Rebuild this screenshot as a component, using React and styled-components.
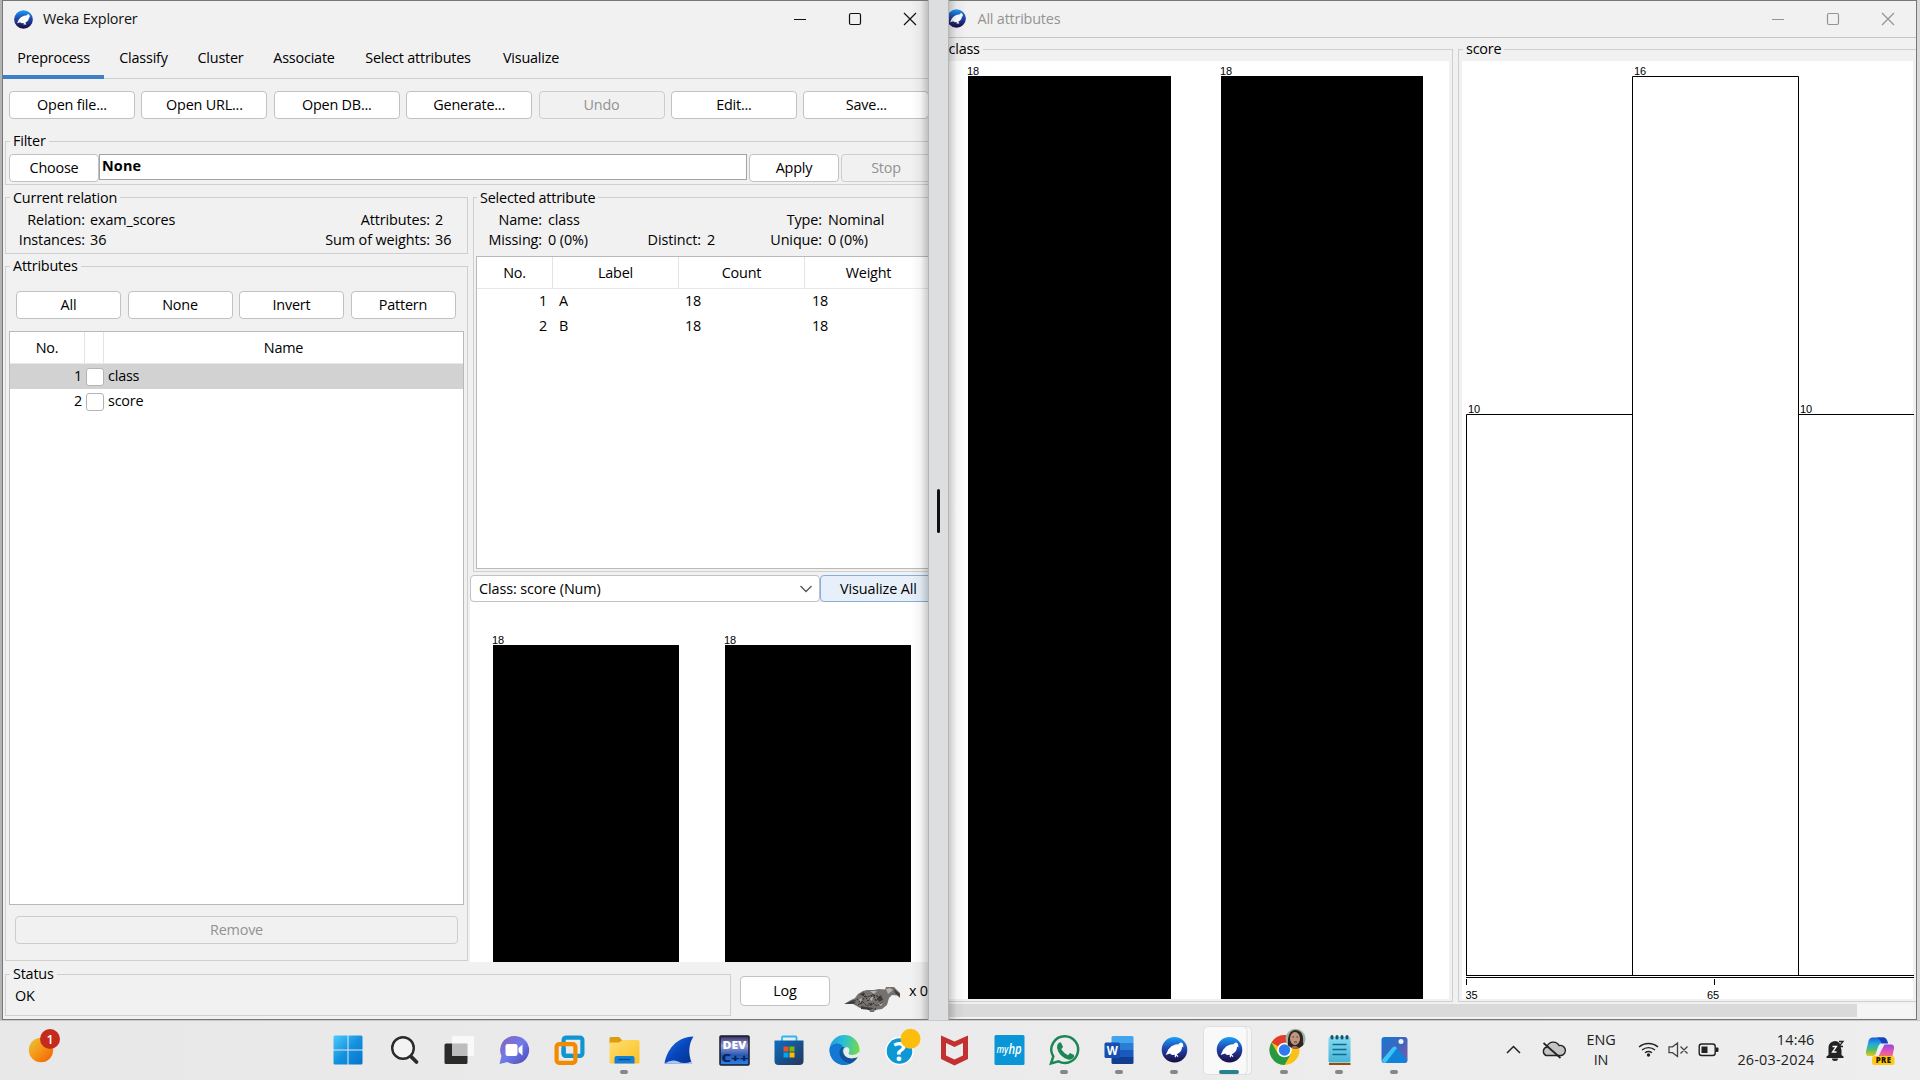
import React from "react";
import styled, { createGlobalStyle } from "styled-components";

const GlobalStyle = createGlobalStyle`
  * { box-sizing: border-box; }
  body { margin: 0; overflow: hidden; background: #ececec; }
`;

const Screen = styled.div`
  width: 1920px;
  height: 1080px;
  display: flex;
  flex-direction: column;
  overflow: hidden;
  font-family: "Open Sans", "Noto Sans", sans-serif;
  font-size: 14.4px;
  letter-spacing: -0.2px;
  line-height: 20px;
  color: #000;
  white-space: nowrap;
`;

const Desktop = styled.div`
  height: 1020px;
  display: flex;
  padding: 0 3px 0 2px;
  background: linear-gradient(90deg, #b4b4b4 0 2px, #d9d9d9 2px);
`;

const Window = styled.section`
  position: relative;
  width: ${(p) => p.$w}px;
  flex: none;
  height: 1020px;
  background: #f1f1f1;
  border: 1px solid #777;
  border-${(p) => p.$open}: 0;
  overflow: hidden;
  display: flex;
  flex-direction: column;
  &::after {
    content: "";
    position: absolute;
    top: 0;
    bottom: 0;
    ${(p) => p.$open}: 0;
    width: 17px;
    pointer-events: none;
    background: linear-gradient(to ${(p) => p.$open}, rgba(0, 0, 0, 0), rgba(0, 0, 0, 0.04) 55%, rgba(0, 0, 0, 0.2));
  }
`;

const Divider = styled.div`
  width: 21px;
  flex: none;
  display: flex;
  align-items: center;
  justify-content: center;
  padding-top: 1px;
  background: linear-gradient(90deg, #b0b2b3 0 1px, #dddedf 1px 20px, #b4b6b7 20px);
`;
const Handle = styled.div`
  width: 3px;
  height: 44px;
  border-radius: 2px;
  background: #111;
`;

const TitleBar = styled.header`
  height: 37px;
  flex: none;
  display: flex;
  align-items: center;
  padding: 0 ${(p) => p.$right}px 1px ${(p) => p.$left}px;
  color: ${(p) => (p.$dim ? "#949494" : "#111")};
  border-bottom: ${(p) => (p.$dim ? "1px solid #c6c6c6" : "0")};
`;
const TitleText = styled.span`
  margin-left: 10px;
  flex: 1;
`;
const Controls = styled.div`
  display: flex;
  gap: 41px;
`;

const Tabs = styled.nav`
  height: 41px;
  flex: none;
  display: flex;
  box-shadow: inset 0 -1px #cfcfcf;
`;
const Tab = styled.div`
  width: ${(p) => p.$w}px;
  text-align: center;
  line-height: 40px;
  border-bottom: 4px solid ${(p) => (p.$active ? "#3d80c5" : "transparent")};
`;

const Toolbar = styled.div`
  display: grid;
  grid-template-columns: repeat(7, 126px);
  column-gap: 6.4px;
  margin: 12px 0 12px 6px;
`;

const Button = styled.button`
  width: ${(p) => (p.$w ? `${p.$w}px` : "100%")};
  height: ${(p) => p.$h || 28}px;
  flex: none;
  margin-left: ${(p) => p.$ml || 0}px;
  padding: 0;
  font: inherit;
  letter-spacing: inherit;
  line-height: 20px;
  color: ${(p) => (p.disabled ? "#919191" : "#000")};
  background: ${(p) => (p.disabled ? "#f1f1f1" : p.$focus ? "#e7f0fa" : "#fff")};
  border: 1px solid ${(p) => (p.disabled ? "#cdcdcd" : p.$focus ? "#82b0dc" : "#c2c2c2")};
  border-radius: 4px;
`;

const Group = styled.fieldset`
  min-width: 0;
  flex: none;
  width: ${(p) => p.$w}px;
  height: ${(p) => p.$h}px;
  margin: ${(p) => p.$m || "0"};
  padding: 0;
  border: 1px solid #cfcfcf;
`;
const Legend = styled.legend`
  margin-left: ${(p) => p.$ml || 4}px;
  padding: 0 3px ${(p) => (p.$raised ? 2 : 0)}px;
  line-height: ${(p) => (p.$raised ? 19 : 21)}px;
`;

const FilterRow = styled.div`
  display: flex;
  padding: 2px 0 0 3px;
`;
const FilterField = styled.div`
  width: 648px;
  height: 26px;
  margin-right: 2px;
  padding-left: 2px;
  line-height: 21px;
  font-weight: 700;
  letter-spacing: 0.15px;
  background: #fff;
  border: 1px solid #a3a3a3;
`;

const Columns = styled.div`
  display: flex;
  height: 775px;
  flex: none;
  margin: 2px 0 2px 2px;
`;
const LeftColumn = styled.div`
  width: 463px;
  flex: none;
`;
const RightColumn = styled.div`
  width: 520px;
  flex: none;
  margin-left: 2px;
  display: flex;
  flex-direction: column;
`;

const Info = styled.div`
  display: grid;
  grid-template-columns: ${(p) => p.$cols};
  column-gap: ${(p) => p.$gap}px;
  grid-auto-rows: 20px;
  padding-top: 2px;
  letter-spacing: -0.1px;
  & > span:nth-child(odd) { justify-self: end; }
`;

const FourButtons = styled.div`
  display: grid;
  grid-template-columns: repeat(4, 105px);
  column-gap: 6.5px;
  margin: 14px 0 12px 10px;
`;
const RemoveSlot = styled.div`
  margin: 11px 0 0 9px;
`;
const Table = styled.div`
  width: ${(p) => p.$w}px;
  height: ${(p) => p.$h}px;
  margin: ${(p) => p.$m};
  background: #fff;
  border: 1px solid #b9b9b9;
`;
const HeadRow = styled.div`
  display: grid;
  grid-template-columns: ${(p) => p.$cols};
  height: 32px;
  line-height: 31px;
  text-align: center;
  border-bottom: 1px solid #e8e8e8;
  & > span { border-right: 1px solid #e4e4e4; }
  & > span:last-child { border-right: 0; }
`;
const Row = styled.div`
  display: grid;
  grid-template-columns: ${(p) => p.$cols};
  height: 25px;
  align-items: center;
  background: ${(p) => (p.$selected ? "#d2d2d2" : "#fff")};
`;
const Cell = styled.span`
  line-height: 23px;
  padding: 0 ${(p) => p.$pr || 0}px 2px ${(p) => p.$pl || 0}px;
  text-align: ${(p) => (p.$right ? "right" : "left")};
`;
const Check = styled.span`
  width: 18px;
  height: 18px;
  margin-left: 1px;
  background: #fff;
  border: 1px solid #b4b4b4;
  border-radius: 3px;
`;

const ComboRow = styled.div`
  display: flex;
  margin-top: 3px;
  letter-spacing: -0.1px;
`;
const Combo = styled.div`
  width: 350px;
  height: 27px;
  display: flex;
  align-items: center;
  justify-content: space-between;
  padding: 0 7px 0 8px;
  background: #fff;
  border: 1px solid #c2c2c2;
  border-radius: 4px;
`;

const MiniChart = styled.div`
  flex: 1;
  background: #fff;
  display: flex;
  gap: ${(p) => p.$gap}px;
  padding: ${(p) => p.$pad};
`;
const BarColumn = styled.div`
  width: ${(p) => p.$w}px;
  flex: none;
  display: flex;
  flex-direction: column;
`;
const BarCount = styled.span`
  height: 12px;
  font: 11px/14px "Liberation Sans", Arial, sans-serif;
  letter-spacing: 0;
  margin-left: -1px;
`;
const BarFill = styled.div`
  flex: 1;
  background: #000;
`;

const StatusRow = styled.footer`
  display: flex;
  padding-left: 2px;
`;
const StatusText = styled.div`
  padding-left: 9px;
  line-height: 22px;
`;
const LogSlot = styled.div`
  padding: 12px 0 0 9px;
`;
const BirdBox = styled.div`
  margin: 22px 0 0 14px;
  width: 60px;
`;
const Times = styled.span`
  margin: 17px 0 0 5px;
`;

const IconClip = styled.div`
  width: 17px;
  margin-left: -2px;
`;
const PlotRow = styled.div`
  display: flex;
  height: 963px;
  flex: none;
  padding-top: 1px;
`;
const PlotBody = styled.div`
  height: 938px;
  margin: ${(p) => p.$m};
  background: #fff;
  display: flex;
`;
const ScrollTrack = styled.div`
  height: 14px;
  margin: 3px 3px 0 0;
  background: #f5f5f5;
`;
const ScrollThumb = styled.div`
  width: 908px;
  height: 13px;
  background: #dadada;
`;

const Taskbar = styled.div`
  height: 60px;
  display: flex;
  background: linear-gradient(90deg, #e8e8e8, #eeeeee);
  border-top: 1px solid #c9c9c9;
`;
const Widgets = styled.div`
  width: 321.5px;
  flex: none;
  padding-left: 20px;
`;
const TaskButton = styled.div`
  position: relative;
  width: 55px;
  height: 59px;
  flex: none;
  &::after {
    content: "";
    position: absolute;
    left: ${(p) => (p.$active ? 17.5 : 23.5)}px;
    top: 49px;
    width: ${(p) => (p.$active ? 20 : 8)}px;
    height: 4px;
    border-radius: 2px;
    background: ${(p) => (p.$active ? "#27818f" : p.$running ? "#868686" : "transparent")};
  }
`;
const Tray = styled.div`
  flex: 1;
  display: flex;
  align-items: center;
  color: #222;
`;
const TrayText = styled.div`
  width: ${(p) => p.$w}px;
  text-align: ${(p) => p.$align};
  line-height: 20px;
  letter-spacing: ${(p) => p.$ls || 0}px;
  padding-bottom: 1px;
  flex: none;
`;
const TraySlot = styled.div`
  width: ${(p) => p.$w}px;
  height: 59px;
  flex: none;
`;

const Svg = styled.svg`
  display: block;
  flex: none;
  overflow: visible;
`;

const WekaMark = ({ size, x, y, id }) => (
  <Svg width={size} height={size} x={x} y={y} viewBox="0 0 26 26">
    <defs>
      <linearGradient id={id} x1="0" y1="0" x2="0" y2="1">
        <stop offset="0" stopColor="#18a0fb" />
        <stop offset=".45" stopColor="#2146ae" />
        <stop offset="1" stopColor="#190b3c" />
      </linearGradient>
    </defs>
    <circle cx="13" cy="13" r="12.8" fill={`url(#${id})`} />
    <path fill="#fff" d="M4.2 18.2 6.8 12.8Q9.5 9 14 7.8L17 7.4Q18.3 5.2 20.3 5.9 21.9 6.700 21.800 10.600L20.500 9.600Q20.500 14.500 16.600 16.600L15.200 17.500 17 19.400 15.800 20.200 14.600 18.800 14.300 20.600 13.200 20.200 13.300 17.900 10.400 18.100 8.500 16.800Z" />
  </Svg>
);

const WindowControls = () => (
  <Controls>
    <Svg width="14" height="14" fill="none" stroke="currentColor"><path d="M1 7.5h12" /></Svg>
    <Svg width="14" height="14" fill="none" stroke="currentColor" strokeWidth="1.2"><rect x="1.5" y="1.5" width="11" height="11" rx="1.5" /></Svg>
    <Svg width="14" height="14" fill="none" stroke="currentColor" strokeWidth="1.2"><path d="M1 1 13 13M13 1 1 13" /></Svg>
  </Controls>
);

const WekaBird = () => (
  <Svg width="60" height="28" viewBox="0 0 60 28">
    <path fill="#75716e" d="M0 18 6 14.500 11 12 14 8 19 5 23 4 30 4 35 3 41 3.500 42 1 50 1 56 7 56 12 53.500 9.500 48 9 45 12 43 19 38 23 31 24 30 26 26 26 25 23 16 22 9 18Z" />
    <path fill="#3f3c3a" d="M1 18 9 14 12 17 8 18ZM17 20 22 21 30 22 26 24 17 23ZM15 9 20 6 21 9ZM50 3 56 8 55.500 11 51 7ZM33 12 37 9 39 14 35 16ZM24 17 29 18 27 20Z" />
    <path fill="#b8b3ad" d="M42 3 46 2 49 4 44 8ZM26 5 33 5 30 8ZM14 14 18 12 17 16ZM24 12 29 11 28 15ZM34 18 39 17 37 20Z" />
    <path d="M10 15l4-2 3 5 4-8 3 5 5-7 3 7 4-4 3 3M14 19l5-3 4 4 6-3 4 3 6-4M24 22l1 3M31 22l1 3M18 9l6 2 5-2 7 2" stroke="#2f2d2b" strokeWidth="1" strokeDasharray="2 1" fill="none" />
  </Svg>
);

const ICONS = [
  ["start", 0, (
    <g fill="url(#gStart)">
      <path d="M11.500 17a1.500 1.500 0 0 1 1.500-1.500H25.500V29.500H11.500ZM26.500 15.500H39a1.500 1.500 0 0 1 1.500 1.500V29.500H26.500ZM11.500 30.500H25.500V44.500H13a1.500 1.500 0 0 1-1.500-1.500ZM26.500 30.500H40.500V43a1.500 1.500 0 0 1-1.500 1.500H26.500Z" />
    </g>
  )],
  ["search", 0, (
    <g fill="none" stroke="#2a2a2a" strokeLinecap="round">
      <circle cx="26" cy="28" r="10.800" strokeWidth="2.400" fill="#f3f3f3" />
      <path d="M34 36.500 39.500 42" strokeWidth="3.800" />
    </g>
  )],
  ["taskview", 0, (
    <g>
      <rect x="12.500" y="23.500" width="23" height="20.500" rx="1.500" fill="#2b2b2a" />
      <rect x="20" y="16" width="22" height="20" rx="1.500" fill="#fafafa" opacity=".94" />
      <path d="M20 23.500H35.500V36H21.500a1.500 1.500 0 0 1-1.500-1.500Z" fill="#bdbdbd" />
    </g>
  )],
  ["chat", 0, (
    <g>
      <path d="M28 16a14.300 14 0 1 1-7.500 26L12.500 44 14.500 36A14.300 14 0 0 1 28 16Z" fill="url(#gChat)" />
      <rect x="18.500" y="24" width="12" height="12" rx="2.200" fill="#fff" />
      <path d="M31.500 28 35.500 24.500V35.500L31.500 32Z" fill="#fff" />
    </g>
  )],
  ["vmware", 0, (
    <g fill="none" strokeWidth="4.200">
      <rect x="21.600" y="17.600" width="18.800" height="18.300" rx="2.500" stroke="#0f96d2" />
      <rect x="14.600" y="24.200" width="18.800" height="18.600" rx="2.500" stroke="#f38b00" />
      <path d="M21.600 28V33.400a2.500 2.500 0 0 0 2.500 2.500H30" stroke="#0f96d2" />
    </g>
  )],
  ["files", 1, (
    <g>
      <path d="M12.500 18.500a1.500 1.500 0 0 1 1.500-1.500H22L25 20H34V24H12.500Z" fill="#dd9c0c" />
      <path d="M12.500 22.500H22L25.500 20H41a1.500 1.500 0 0 1 1.500 1.500V42a1.500 1.500 0 0 1-1.500 1.500H14a1.500 1.500 0 0 1-1.500-1.500Z" fill="url(#gFolder)" />
      <path d="M17.500 43.500V38a2 2 0 0 1 2-2H35.500a2 2 0 0 1 2 2V43.500Z" fill="#1180d6" />
      <path d="M21.500 39.500H33.500" stroke="#0a4c8f" strokeWidth="1.300" />
    </g>
  )],
  ["shark", 0, (
    <g>
      <path d="M12.500 43.500C15 30 24 17 41.500 16.500 36.500 24 36 34 40 43.500Z" fill="url(#gShark)" />
      <path d="M12.500 43.500Q20 38.500 26 41.500T39.500 41.500L40.500 44Z" fill="#a9c6ef" />
    </g>
  )],
  ["dev", 0, (
    <g fontFamily="Open Sans, sans-serif" fontWeight="800" letterSpacing="0">
      <rect x="13" y="16" width="29" height="29" rx="1" fill="url(#gDev)" stroke="#151b2a" strokeWidth="1.500" />
      <text x="15.500" y="28.500" fontSize="10.500" fill="#fff" textLength="24" lengthAdjust="spacingAndGlyphs">DEV</text>
      <text x="14.500" y="41.800" fontSize="10.500" fill="#07235a" textLength="27" lengthAdjust="spacingAndGlyphs">C++</text>
    </g>
  )],
  ["store", 0, (
    <g>
      <path d="M20 21V17.500a1 1 0 0 1 1-1H33.500a1 1 0 0 1 1 1V21" fill="none" stroke="#29b8f2" strokeWidth="1.800" />
      <path d="M12.500 20.500H41.500V41a4 4 0 0 1-4 4H16.500a4 4 0 0 1-4-4Z" fill="url(#gStore)" />
      <path fill="#f25022" d="M21.500 26.500h5v5h-5z" />
      <path fill="#7fba00" d="M27.500 26.500h5v5h-5z" />
      <path fill="#00a4ef" d="M21.500 32.500h5v5h-5z" />
      <path fill="#ffb900" d="M27.500 32.500h5v5h-5z" />
    </g>
  )],
  ["edge", 0, (
    <g>
      <circle cx="27.500" cy="30" r="15" fill="url(#gEdge)" />
      <path d="M12.700 28C15 23 22 22 26 26 22 28 22 35 27 39 31 42 37 41 40.500 37.500 37 43 32 45 27 45 18 45 11.500 37 12.700 28Z" fill="#1477d3" />
      <path d="M25 27C20 31 22 41 33 43.500 37 41.500 39.500 39 40.700 37 35 40 28 38 26 33 25 30 26 28 27.500 27Z" fill="#124f9c" />
      <path d="M26.500 32C26 28.500 28.500 26.500 31 27.500 33 29 32.500 31.500 31.500 33.500 33 36 39 35.500 42.500 31.500L42.500 36Q35 40 29.500 37 27 35 26.500 32Z" fill="#ebebeb" />
    </g>
  )],
  ["help", 0, (
    <g>
      <circle cx="27.500" cy="31" r="14.200" fill="#fff" />
      <circle cx="27.500" cy="31" r="12.800" fill="#0d97d5" />
      <text x="27.500" y="40.500" textAnchor="middle" fontFamily="Open Sans, sans-serif" fontWeight="700" fontSize="26" fill="#fff">?</text>
      <circle cx="38.500" cy="18.800" r="10" fill="#fdbd0d" />
    </g>
  )],
  ["mcafee", 0, (
    <path d="M14 15.500 27.500 21.500 41 15.500V39L27.500 45.500 14 39ZM19 23V35.500L27.500 39.500 36 35.500V23L27.500 27Z" fill="#c2312f" fillRule="evenodd" />
  )],
  ["myhp", 0, (
    <g fontFamily="Open Sans, sans-serif" fontStyle="italic" fill="#fff">
      <rect x="12.500" y="15" width="30" height="30" rx="1.500" fill="#0a96d6" />
      <text x="14.500" y="33" fontSize="10.500" fontWeight="600" textLength="11.500" lengthAdjust="spacingAndGlyphs">my</text>
      <text x="26.500" y="33.500" fontSize="15" fontWeight="600" textLength="13" lengthAdjust="spacingAndGlyphs">hp</text>
    </g>
  )],
  ["whatsapp", 1, (
    <g>
      <path d="M28 16.300a13.300 13.300 0 1 1-6.500 25L14 43.500 16.300 36.500A13.300 13.300 0 0 1 28 16.300Z" fill="none" stroke="#1c8755" strokeWidth="2.500" />
      <path d="M22 22.500h2l2 4.500-1.800 2.300Q27 33.500 31 35.200L33 33 37 35V37Q35 40.500 31 39.500 22 36.500 20 28 19.700 24.500 22 22.500Z" fill="#1c8755" />
    </g>
  )],
  ["word", 1, (
    <g>
      <path fill="#41a5ee" d="M19.500 17.500a1.500 1.500 0 0 1 1.500-1.500H40a1.500 1.500 0 0 1 1.500 1.500V23H19.500z" />
      <path fill="#2b7cd3" d="M19.500 23h22v7h-22z" />
      <path fill="#185abd" d="M19.500 30h22v7h-22z" />
      <path fill="#103f91" d="M19.500 37h22v5.500a1.500 1.500 0 0 1-1.500 1.500H21a1.500 1.500 0 0 1-1.500-1.500z" />
      <rect x="12.500" y="22.500" width="15.500" height="15.500" rx="1.500" fill="#174fb0" />
      <text x="20.200" y="34.500" textAnchor="middle" fontFamily="Open Sans, sans-serif" fontWeight="700" fontSize="11.500" fill="#fff">W</text>
    </g>
  )],
  ["weka", 1, <WekaMark size={26} x={14.5} y={16.8} id="gWekaA" />],
  ["wekaActive", 2, (
    <g>
      <rect x="12" y="6.500" width="37.500" height="48" rx="4" fill="#f6f6f6" stroke="#dedede" />
      <rect x="1.500" y="6.500" width="43.500" height="48" rx="4" fill="#f9f9f9" stroke="#dedede" />
      <WekaMark size={26} x={14.5} y={16.8} id="gWekaB" />
    </g>
  )],
  ["chrome", 1, (
    <g>
      <circle cx="27.500" cy="30" r="15" fill="#fbc116" />
      <path d="M27.500 30 14.500 22.500A15 15 0 0 1 40.500 22.500H27.500Z" fill="#e33b2e" />
      <path d="M14.500 22.500A15 15 0 0 0 27.500 45L34 33.700 27.500 30 21 33.700Z" fill="#269a43" />
      <circle cx="27.500" cy="30" r="7.300" fill="#fff" />
      <circle cx="27.500" cy="30" r="5.700" fill="#2d7bee" />
      <g clipPath="url(#cAvatar)">
        <rect x="28" y="8" width="22" height="22" fill="#9fb0a4" />
        <path d="M31 30V19Q32 10 39 10 47 11 46 22L48 30Z" fill="#2d2523" />
        <ellipse cx="38" cy="18.500" rx="5" ry="6.500" fill="#c09580" />
        <path d="M33 30Q35 25 39 26L45 30Z" fill="#a3695a" />
        <path d="M35.500 17h1.500M39.500 17h1.500M37 22h3" stroke="#512f2a" />
      </g>
    </g>
  )],
  ["notepad", 1, (
    <g>
      <path d="M17 43H38.500V45H17Z" fill="#9b4b05" />
      <path d="M16.500 18.500a1.500 1.500 0 0 1 1.500-1.500H37a1.500 1.500 0 0 1 1.500 1.500V41a1.500 1.500 0 0 1-1.500 1.500H18a1.500 1.500 0 0 1-1.500-1.500Z" fill="url(#gNote)" />
      <path d="M20.500 24.500H34.500M20.500 29.500H34.500M20.500 34.500H34.500" stroke="#0b6d8c" strokeWidth="1.700" />
      <g fill="#14566b"><rect x="18.500" y="15" width="3" height="4.500" rx="1.500" /><rect x="23.500" y="15" width="3" height="4.500" rx="1.500" /><rect x="28.500" y="15" width="3" height="4.500" rx="1.500" /><rect x="33.500" y="15" width="3" height="4.500" rx="1.500" /></g>
    </g>
  )],
  ["photos", 1, (
    <g>
      <rect x="14.500" y="17" width="26" height="26" rx="3" fill="url(#gPhoto)" />
      <path d="M15 40 25.500 27.500Q27.500 25.500 29.500 27.500L40.300 39.500Q40 43 37.500 43H17.500Q15.500 43 15 40Z" fill="#1184d9" />
      <path d="M15 40 25.500 27.500Q27.500 25.500 30 28L18.500 43H17.500Q15.500 43 15 40Z" fill="#38c7f5" />
      <circle cx="34" cy="21.500" r="2.500" fill="#e7f4ff" />
    </g>
  )],
];

const grad = (id, stops, x2 = 1, y2 = 1) => (
  <linearGradient id={id} x1="0" y1="0" x2={x2} y2={y2}>
    {stops.map((c, i) => <stop key={c + i} offset={i / (stops.length - 1)} stopColor={c} />)}
  </linearGradient>
);

const Defs = () => (
  <defs>
    {grad("gStart", ["#4ccbfb", "#1492e0", "#0274cf"])}
    {grad("gChat", ["#8b60b5", "#6f7bea", "#4b46b5"])}
    {grad("gFolder", ["#ffdf72", "#fcbf21"])}
    {grad("gShark", ["#1f7af0", "#0846bd", "#05328c"])}
    {grad("gDev", ["#302d5e", "#9a9cd8", "#2858b0", "#2c84ee"], 0, 1)}
    {grad("gStore", ["#0c6fc0", "#17528f", "#263757"])}
    {grad("gEdge", ["#1d9ae0", "#2cc0d4", "#6fd94f"], 1, 0.2)}
    {grad("gNote", ["#87daf0", "#46b4d8"], 0, 1)}
    {grad("gPhoto", ["#1478d4", "#3f65bd", "#8a56a8"])}
    {grad("gSun", ["#e6c83a", "#f79415", "#ef5c07"])}
    {grad("gCopA", ["#1a5fd8", "#21a6e0", "#4fc06a", "#f0c419"], 0, 1)}
    {grad("gCopB", ["#8a4be8", "#e254b4", "#f77b5e"], 0, 1)}
    <clipPath id="cAvatar"><circle cx="38.500" cy="18.800" r="10" /></clipPath>
  </defs>
);

const TABS = [["Preprocess", 101], ["Classify", 79], ["Cluster", 75], ["Associate", 92], ["Select attributes", 136], ["Visualize", 90]];
const TOOLS = ["Open file...", "Open URL...", "Open DB...", "Generate...", "Undo", "Edit...", "Save..."];
const ATTR_COLS = "75px 19px 1fr";
const LABEL_COLS = "76px 126px 126px 1fr";

const Explorer = () => (
  <Window $w={926} $open="right">
    <TitleBar $left={11} $right={11}>
      <WekaMark size={19} id="gWekaC" />
      <TitleText>Weka Explorer</TitleText>
      <WindowControls />
    </TitleBar>
    <Tabs>{TABS.map(([t, w], i) => <Tab key={t} $w={w} $active={i === 0}>{t}</Tab>)}</Tabs>
    <Toolbar>{TOOLS.map((t) => <Button key={t} disabled={t === "Undo"}>{t}</Button>)}</Toolbar>
    <Group $w={960} $h={54} $m="0 0 0 2px">
      <Legend $raised>Filter</Legend>
      <FilterRow>
        <Button $w={90}>Choose</Button>
        <FilterField>None</FilterField>
        <Button $w={90}>Apply</Button>
        <Button $w={90} $ml={2} disabled>Stop</Button>
      </FilterRow>
    </Group>
    <Columns>
      <LeftColumn>
        <Group $w={463} $h={67}>
          <Legend>Current relation</Legend>
          <Info $cols="79px 240px 95px 30px" $gap={5}>
            <span>Relation:</span><span>exam_scores</span><span>Attributes:</span><span>2</span>
            <span>Instances:</span><span>36</span><span>Sum of weights:</span><span>36</span>
          </Info>
        </Group>
        <Group $w={463} $h={705} $m="2px 0 0">
          <Legend $raised>Attributes</Legend>
          <FourButtons>{["All", "None", "Invert", "Pattern"].map((t) => <Button key={t}>{t}</Button>)}</FourButtons>
          <Table $w={455} $h={574} $m="0 0 0 3px">
            <HeadRow $cols={ATTR_COLS}><span>No.</span><span /><span>Name</span></HeadRow>
            {["class", "score"].map((n, i) => (
              <Row key={n} $cols={ATTR_COLS} $selected={i === 0}>
                <Cell $right $pr={3}>{i + 1}</Cell>
                <Check />
                <Cell $pl={4}>{n}</Cell>
              </Row>
            ))}
          </Table>
          <RemoveSlot><Button disabled $w={443}>Remove</Button></RemoveSlot>
        </Group>
      </LeftColumn>
      <RightColumn>
        <Group $w={500} $h={385} $m="0 0 0 3px">
          <Legend $ml={3}>Selected attribute</Legend>
          <Info $cols="68px 60px 87px 30px 79px 90px" $gap={6}>
            <span>Name:</span><span>class</span><span /><span /><span>Type:</span><span>Nominal</span>
            <span>Missing:</span><span>0 (0%)</span><span>Distinct:</span><span>2</span><span>Unique:</span><span>0 (0%)</span>
          </Info>
          <Table $w={457} $h={313} $m="6px 0 0 2px">
            <HeadRow $cols={LABEL_COLS}><span>No.</span><span>Label</span><span>Count</span><span>Weight</span></HeadRow>
            {["A", "B"].map((n, i) => (
              <Row key={n} $cols={LABEL_COLS}>
                <Cell $right $pr={6}>{i + 1}</Cell>
                <Cell $pl={6}>{n}</Cell>
                <Cell $pl={6}>18</Cell>
                <Cell $pl={7}>18</Cell>
              </Row>
            ))}
          </Table>
        </Group>
        <ComboRow>
          <Combo>
            Class: score (Num)
            <Svg width="12" height="8" fill="none" stroke="#555" strokeWidth="1.3"><path d="M.5 1 6 6.500 11.500 1" /></Svg>
          </Combo>
          <Button $w={117} $h={27} $focus>Visualize All</Button>
        </ComboRow>
        <MiniChart $gap={46} $pad="31px 0 0 23px">
          {[0, 1].map((i) => <BarColumn key={i} $w={186}><BarCount>18</BarCount><BarFill /></BarColumn>)}
        </MiniChart>
      </RightColumn>
    </Columns>
    <StatusRow>
      <Group $w={726} $h={52}>
        <Legend $raised>Status</Legend>
        <StatusText>OK</StatusText>
      </Group>
      <LogSlot><Button $w={90} $h={30}>Log</Button></LogSlot>
      <BirdBox><WekaBird /></BirdBox>
      <Times>x 0</Times>
    </StatusRow>
  </Window>
);

const AllAttributes = () => (
  <Window $w={968} $open="left">
    <TitleBar $dim $left={0} $right={21}>
      <IconClip><WekaMark size={19} id="gWekaD" /></IconClip>
      <TitleText>&nbsp;All attributes</TitleText>
      <WindowControls />
    </TitleBar>
    <PlotRow>
      <Group $w={508} $h={963} $m="0 0 0 -4px">
        <Legend $raised $ml={-0.5}>class</Legend>
        <PlotBody $m="1px 3px 0 3px">
          <MiniChart $gap={50} $pad="3px 0 0 19px">
            {[203, 202].map((w) => <BarColumn key={w} $w={w}><BarCount>18</BarCount><BarFill /></BarColumn>)}
          </MiniChart>
        </PlotBody>
      </Group>
      <Group $w={480} $h={963} $m="0 0 0 5px">
        <Legend $raised>score</Legend>
        <PlotBody $m="1px 24px 0 3px">
          <Svg width="452" height="938" viewBox="1462 61 452 938" fontFamily="Liberation Sans, Arial, sans-serif" fontSize="11" letterSpacing="0">
            <path d="M1466.500 975V414.500H1632.500M1632.500 975V76.500H1798.500V975M1798.500 414.500H1914M1466 975.500H1914M1466 977.500H1914M1466.500 979V985M1714.500 979V985" fill="none" stroke="#000" />
            <text x="1468" y="413">10</text>
            <text x="1634" y="75">16</text>
            <text x="1800" y="413">10</text>
            <text x="1465.5" y="999">35</text>
            <text x="1707" y="999">65</text>
          </Svg>
        </PlotBody>
      </Group>
    </PlotRow>
    <ScrollTrack><ScrollThumb /></ScrollTrack>
  </Window>
);

const TrayIcons = ({ w, children }) => (
  <TraySlot $w={w}><Svg width={w} height="59" viewBox={`0 1 ${w} 59`}>{children}</Svg></TraySlot>
);

const Bar = () => (
  <Taskbar>
    <Widgets>
      <Svg width="60" height="59" viewBox="20 1 60 59">
        <Defs />
        <circle cx="41" cy="30" r="12.200" fill="url(#gSun)" />
        <circle cx="50" cy="19" r="10" fill="#c42b1c" />
        <text x="50" y="23.500" textAnchor="middle" fontSize="12.5" fontWeight="600" fill="#fff">1</text>
      </Svg>
    </Widgets>
    {ICONS.map(([name, state, art]) => (
      <TaskButton key={name} $running={state === 1} $active={state === 2}>
        <Svg width="55" height="59" viewBox="0 1 55 59">{art}</Svg>
      </TaskButton>
    ))}
    <Tray>
      <TrayIcons w={154}>
        <path d="M85 33 91.500 26.500 98 33" fill="none" stroke="#222" strokeWidth="1.500" />
        <path d="M124 35.500a4.500 4.500 0 0 1 1-8.500 6.500 6.500 0 0 1 12-1.500 5 5 0 0 1 2.500 10Z" fill="#c4c4c4" stroke="#222" strokeWidth="1.400" />
        <path d="M121.500 23 138.500 38" stroke="#222" strokeWidth="1.700" />
      </TrayIcons>
      <TrayText $w={51} $align="center" $ls={-0.1}>ENG<br />IN</TrayText>
      <TrayIcons w={98}>
        <g fill="none" stroke="#222" strokeWidth="1.400">
          <path d="M12 27a14.500 14.500 0 0 1 19 0M15 30a10 10 0 0 1 13 0M18 32.700a6 6 0 0 1 7 0" />
          <path d="M42 26.800h3.500l5-3.800v13.500l-5-3.800h-3.500zM53.500 26.500l7 7M60.500 26.500l-7 7" stroke="#444" strokeWidth="1.300" />
          <rect x="72.200" y="24" width="16" height="11.500" rx="2.500" />
        </g>
        <circle cx="21.500" cy="35" r="1.700" fill="#222" />
        <rect x="74.500" y="26.500" width="6" height="6.500" fill="#222" />
        <path d="M88.500 27.500h2a1 1 0 0 1 1 1v2.500a1 1 0 0 1-1 1h-2z" fill="#222" />
      </TrayIcons>
      <TrayText $w={90} $align="right" $ls={0.2}>14:46<br />26-03-2024</TrayText>
      <TrayIcons w={104}>
        <path d="M13.500 35V28a6.500 6.500 0 0 1 11-5L26.500 30V35l2 1.500V38H11.500V36.500ZM17 38.500h6a3 2.500 0 0 1-6 0Z" fill="#222" />
        <path d="M17.500 26.500h4l-4 5.500h4" stroke="#fff" strokeWidth="1.300" fill="none" />
        <path d="M24 21.500h4l-4 5h4" stroke="#222" strokeWidth="1.300" fill="none" />
        <path d="M55.500 17.500H68.500Q71.500 17.500 73 23H67.500Q64.500 23 63 27L60.500 34.500Q59.500 36 57.500 36H53.500Q50.500 36 51 31.500L53.500 21Q54.500 17.500 57.500 17.500Z" fill="url(#gCopA)" />
        <path d="M61.500 17.500H68.500Q71.500 17.500 73 23.500H66.500Q65.500 19 61.500 17.500Z" fill="#1942b8" />
        <path d="M69.500 24.500H76Q79.500 24.500 79 28.500L77 38H61Q64 37 65.500 32Z" fill="url(#gCopB)" />
        <rect x="57" y="36" width="22.500" height="9" rx="2.500" fill="#ffc919" />
        <text x="68.5" y="43.400" textAnchor="middle" fontSize="7.800" fontWeight="800" letterSpacing=".4" fill="#221a00">PRE</text>
      </TrayIcons>
    </Tray>
  </Taskbar>
);

export default function App() {
  return (
    <Screen>
      <GlobalStyle />
      <Desktop>
        <Explorer />
        <Divider><Handle /></Divider>
        <AllAttributes />
      </Desktop>
      <Bar />
    </Screen>
  );
}
